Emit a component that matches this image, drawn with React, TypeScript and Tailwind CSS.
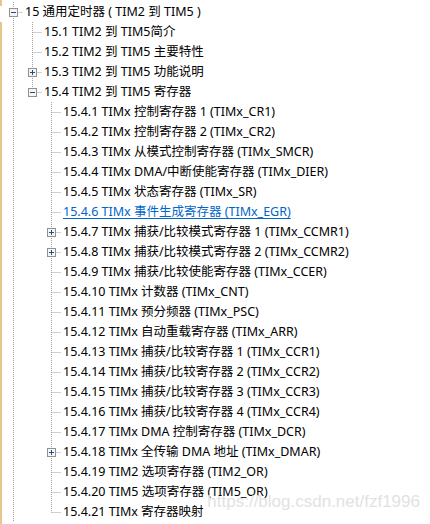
import React from "react";

type Row = {
  level: number;
  text: string;
  last?: boolean;
  box?: "open" | "closed";
  link?: boolean;
};

// which ancestor lines keep running, per level
const carry: Record<number, boolean[]> = {
  0: [],
  1: [true],
  2: [true, false],
};

const rows: Row[] = [
  { level: 0, text: "15 通用定时器 ( TIM2 到 TIM5 )", box: "open" },
  { level: 1, text: "15.1 TIM2 到 TIM5简介" },
  { level: 1, text: "15.2 TIM2 到 TIM5 主要特性" },
  { level: 1, text: "15.3 TIM2 到 TIM5 功能说明", box: "closed" },
  { level: 1, text: "15.4 TIM2 到 TIM5 寄存器", box: "open", last: true },
  { level: 2, text: "15.4.1 TIMx 控制寄存器 1 (TIMx_CR1)" },
  { level: 2, text: "15.4.2 TIMx 控制寄存器 2 (TIMx_CR2)" },
  { level: 2, text: "15.4.3 TIMx 从模式控制寄存器 (TIMx_SMCR)" },
  { level: 2, text: "15.4.4 TIMx DMA/中断使能寄存器 (TIMx_DIER)" },
  { level: 2, text: "15.4.5 TIMx 状态寄存器 (TIMx_SR)" },
  { level: 2, text: "15.4.6 TIMx 事件生成寄存器 (TIMx_EGR)", link: true },
  { level: 2, text: "15.4.7 TIMx 捕获/比较模式寄存器 1 (TIMx_CCMR1)", box: "closed" },
  { level: 2, text: "15.4.8 TIMx 捕获/比较模式寄存器 2 (TIMx_CCMR2)", box: "closed" },
  { level: 2, text: "15.4.9 TIMx 捕获/比较使能寄存器 (TIMx_CCER)" },
  { level: 2, text: "15.4.10 TIMx 计数器 (TIMx_CNT)" },
  { level: 2, text: "15.4.11 TIMx 预分频器 (TIMx_PSC)" },
  { level: 2, text: "15.4.12 TIMx 自动重载寄存器 (TIMx_ARR)" },
  { level: 2, text: "15.4.13 TIMx 捕获/比较寄存器 1 (TIMx_CCR1)" },
  { level: 2, text: "15.4.14 TIMx 捕获/比较寄存器 2 (TIMx_CCR2)" },
  { level: 2, text: "15.4.15 TIMx 捕获/比较寄存器 3 (TIMx_CCR3)" },
  { level: 2, text: "15.4.16 TIMx 捕获/比较寄存器 4 (TIMx_CCR4)" },
  { level: 2, text: "15.4.17 TIMx DMA 控制寄存器 (TIMx_DCR)" },
  { level: 2, text: "15.4.18 TIMx 全传输 DMA 地址 (TIMx_DMAR)", box: "closed" },
  { level: 2, text: "15.4.19 TIM2 选项寄存器 (TIM2_OR)" },
  { level: 2, text: "15.4.20 TIM5 选项寄存器 (TIM5_OR)" },
  { level: 2, text: "15.4.21 TIMx 寄存器映射", last: true },
];

const dot = { stroke: "#a0a0a0", strokeWidth: 1, strokeDasharray: "1 1" };

const Gutter = ({ row }: { row: Row }) => {
  const w = 23 + 19 * row.level;
  const x = 11.5 + 19 * row.level;
  return (
    <svg width={w} height={20} className="shrink-0">
      {carry[row.level].map((on, d) =>
        on ? <line key={d} x1={11.5 + 19 * d} y1={0} x2={11.5 + 19 * d} y2={20} {...dot} /> : null
      )}
      <line x1={x} y1={0} x2={x} y2={row.last ? 10.5 : 20} {...dot} />
      <line x1={x} y1={10.5} x2={w - 2} y2={10.5} {...dot} />
      {row.box && (
        <g>
          <rect x={x - 4} y={6.5} width={8} height={8} fill="#f4f4f4" stroke="#919191" />
          <line x1={x - 2.5} y1={10.5} x2={x + 2.5} y2={10.5} stroke="#2b4a8c" />
          {row.box === "closed" && (
            <line x1={x} y1={8} x2={x} y2={13} stroke="#2b4a8c" />
          )}
        </g>
      )}
    </svg>
  );
};

export default function App() {
  return (
    <div className="relative flex w-[430px] h-[524px] bg-white overflow-hidden">
      <div className="flex flex-col w-[2px] shrink-0">
        <div className="h-[6px] bg-[#e6c58e]" />
        <div className="h-[16px]" />
        <div className="flex-1 bg-[#e6c58e]" />
      </div>
      <div className="flex flex-col pt-[2px] text-[12.5px] text-black [font-family:'Noto_Sans','Noto_Sans_CJK_SC',sans-serif]">
        {rows.map((row) => (
          <div key={row.text} className="flex items-center h-[20px] whitespace-nowrap">
            <Gutter row={row} />
            <span
              className={
                row.link
                  ? "leading-[20px] text-[#0066cc] underline underline-offset-2"
                  : "leading-[20px]"
              }
            >
              {row.text}
            </span>
          </div>
        ))}
      </div>
      <div className="absolute right-[10px] bottom-[10px] text-[17px] text-[#e2e2e2] [font-family:'Liberation_Sans',sans-serif]">
        https://blog.csdn.net/fzf1996
      </div>
    </div>
  );
}
